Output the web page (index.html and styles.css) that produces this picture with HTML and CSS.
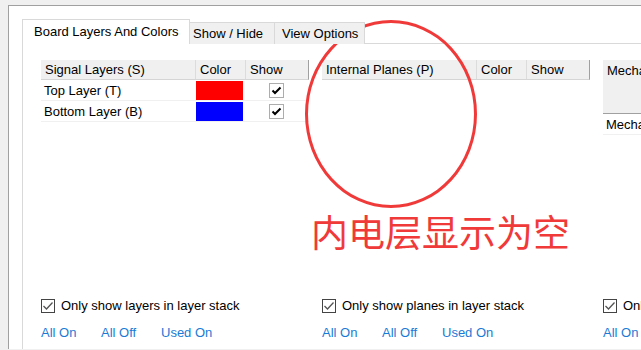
FILE: index.html
```html
<!DOCTYPE html>
<html lang="en">
<head>
    <meta charset="UTF-8">
    <title>View Configuration</title>
    <link rel="stylesheet" href="styles.css">
</head>
<body>
    <div class="frame">
        <div class="tabs">
            <div class="tab active">Board Layers And Colors</div>
            <div class="tab tab-show">Show / Hide</div>
            <div class="tab tab-view">View Options</div>
        </div>
        <div class="panel">
            <div class="group">
                <div class="grid">
                    <div class="head">
                        <div class="hcell c-name">Signal Layers (S)</div>
                        <div class="hcell c-color">Color</div>
                        <div class="hcell c-show">Show</div>
                    </div>
                    <div class="row">
                        <div class="cell c-name">Top Layer (T)</div>
                        <div class="cell c-color"><span class="swatch red"></span></div>
                        <div class="cell c-show"><span class="tick"><svg width="11" height="11" viewBox="0 0 11 11"><path d="M1.5 5.5 L4 8 L9.5 2.5" fill="none" stroke="#000" stroke-width="2"/></svg></span></div>
                    </div>
                    <div class="row">
                        <div class="cell c-name">Bottom Layer (B)</div>
                        <div class="cell c-color"><span class="swatch blue"></span></div>
                        <div class="cell c-show"><span class="tick"><svg width="11" height="11" viewBox="0 0 11 11"><path d="M1.5 5.5 L4 8 L9.5 2.5" fill="none" stroke="#000" stroke-width="2"/></svg></span></div>
                    </div>
                </div>
                <div class="footer">
                    <label class="opt"><span class="box"><svg width="12" height="12" viewBox="0 0 12 12"><path d="M1.5 6 L4.5 9 L10.5 2.5" fill="none" stroke="#555" stroke-width="1.3"/></svg></span>Only show layers in layer stack</label>
                    <div class="links"><a>All On</a><a>All Off</a><a>Used On</a></div>
                </div>
            </div>

            <div class="group">
                <div class="grid">
                    <div class="head">
                        <div class="hcell c-name">Internal Planes (P)</div>
                        <div class="hcell c-color">Color</div>
                        <div class="hcell c-show">Show</div>
                    </div>
                </div>
                <div class="footer">
                    <label class="opt"><span class="box"><svg width="12" height="12" viewBox="0 0 12 12"><path d="M1.5 6 L4.5 9 L10.5 2.5" fill="none" stroke="#555" stroke-width="1.3"/></svg></span>Only show planes in layer stack</label>
                    <div class="links"><a>All On</a><a>All Off</a><a>Used On</a></div>
                </div>
            </div>

            <div class="group">
                <div class="grid">
                    <div class="head tall">
                        <div class="hcell c-mech">Mechanical Layers (M)</div>
                    </div>
                    <div class="row">
                        <div class="cell c-mech">Mechanical 1</div>
                    </div>
                </div>
                <div class="footer">
                    <label class="opt"><span class="box"><svg width="12" height="12" viewBox="0 0 12 12"><path d="M1.5 6 L4.5 9 L10.5 2.5" fill="none" stroke="#555" stroke-width="1.3"/></svg></span>Only show enabled mechanical layers</label>
                    <div class="links"><a>All On</a><a>All Off</a><a>Used On</a></div>
                </div>
            </div>
        </div>
    </div>

    <div class="mark-circle"></div>
    <div class="mark-text">内电层显示为空</div>
</body>
</html>
```

FILE: styles.css
```css
body {
    margin: 0;
    background: #f0f0f0;
    font-family: "Liberation Sans", Arial, sans-serif;
    font-size: 13px;
    color: #000;
    overflow: hidden;
    height: 350px;
    position: relative;
}
.frame {
    margin: 5px 0 0 8px;
    height: 344px;
    border-top: 1px solid #a0a0a0;
    border-left: 1px solid #a0a0a0;
    background: #fff;
    padding: 13px 0 0 13px;
    box-sizing: border-box;
    display: flex;
    flex-direction: column;
}
.tabs {
    display: flex;
    align-items: flex-end;
    height: 25px;
    margin-bottom: -1px;
    position: relative;
    z-index: 1;
}
.tab {
    height: 22px;
    line-height: 21px;
    border: 1px solid #d9d9d9;
    border-bottom: none;
    background: #f0f0f0;
    box-sizing: border-box;
    padding-left: 3px;
    white-space: nowrap;
    margin-left: -1px;
}
.tab.active {
    height: 25px;
    line-height: 23px;
    background: #fff;
    width: 168px;
    padding-left: 11px;
    margin-left: 0;
}
.tab-show {
    width: 86px;
}
.tab-view {
    width: 91px;
    padding-left: 7px;
}
.panel {
    flex: 1;
    border-top: 1px solid #d9d9d9;
    border-left: 1px solid #d9d9d9;
    padding: 16px 0 0 18px;
    display: grid;
    grid-template-columns: 268px 268px 268px;
    column-gap: 13px;
    overflow: hidden;
}
.group {
    display: flex;
    flex-direction: column;
    height: 282px;
}
.head {
    display: flex;
    height: 20px;
    background: #f0f0f0;
    border-bottom: 1px solid #d5d5d5;
    border-right: 1px solid #a0a0a0;
    box-sizing: border-box;
}
.head.tall {
    height: 54px;
    border-right: none;
    border-bottom: 1px solid #a0a0a0;
}
.hcell {
    line-height: 19px;
    padding-left: 4px;
    box-sizing: border-box;
    border-left: 1px solid #dcdcdc;
    white-space: nowrap;
}
.hcell:first-child {
    border-left: none;
}
.head.tall .hcell {
    line-height: 21px;
}
.c-name {
    width: 154px;
}
.c-color {
    width: 50px;
}
.c-show {
    flex: 1;
}
.c-mech {
    width: 268px;
    white-space: nowrap;
}
.row {
    display: flex;
    height: 21px;
    border-bottom: 1px solid #f0f0f0;
    box-sizing: border-box;
    width: 268px;
}
.cell {
    line-height: 21px;
    padding-left: 3px;
    box-sizing: border-box;
}
.row .c-color {
    padding: 1px 0 0 1px;
}
.swatch {
    display: block;
    width: 47px;
    height: 19px;
}
.red {
    background: #ff0000;
}
.blue {
    background: #0000ff;
}
.row .c-show {
    padding: 3px 0 0 24px;
}
.tick {
    display: flex;
    align-items: center;
    justify-content: center;
    width: 13px;
    height: 13px;
    border: 1px solid #adadad;
    background: #fff;
}
.footer {
    margin-top: auto;
    display: flex;
    flex-direction: column;
    gap: 11px;
    padding-bottom: 1px;
}
.opt {
    display: flex;
    align-items: center;
    gap: 6px;
    height: 15px;
    color: #000;
    white-space: nowrap;
}
.box {
    display: flex;
    align-items: center;
    justify-content: center;
    width: 12px;
    height: 12px;
    border: 1px solid #444;
    background: #fff;
}
.links {
    display: flex;
    height: 17px;
    line-height: 17px;
}
.links a {
    width: 60px;
    color: #1a7ad6;
    white-space: nowrap;
}
.mark-circle {
    position: absolute;
    left: 305px;
    top: 20px;
    width: 172px;
    height: 188px;
    border: 3px solid #f03a3a;
    border-radius: 50%;
    box-sizing: border-box;
}
.mark-text {
    position: absolute;
    left: 311px;
    top: 207px;
    font-family: "Noto Sans CJK SC", sans-serif;
    font-size: 37px;
    line-height: 48px;
    color: #f03a3a;
    white-space: nowrap;
}
```
